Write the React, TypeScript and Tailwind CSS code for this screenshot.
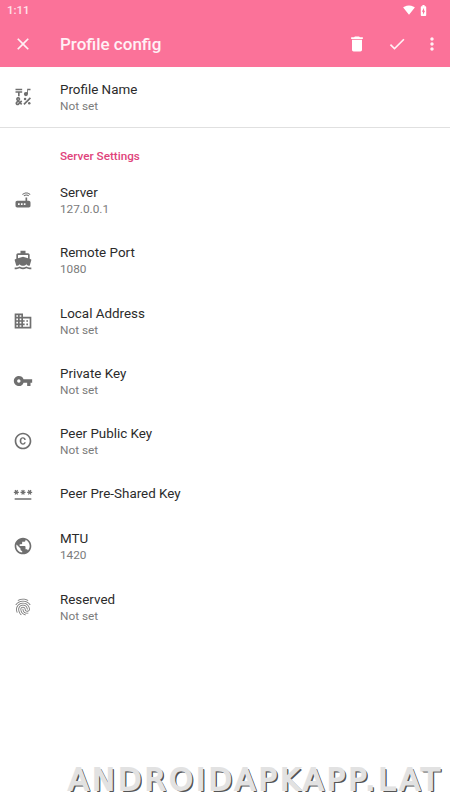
import React from 'react';
import {
  MdBatteryChargingFull,
  MdCheck,
  MdClose,
  MdCopyright,
  MdDelete,
  MdDirectionsBoat,
  MdDomain,
  MdEmojiSymbols,
  MdFingerprint,
  MdMoreVert,
  MdPassword,
  MdPublic,
  MdRouter,
  MdSignalWifi4Bar,
  MdVpnKey,
} from 'react-icons/md';
import type { IconType } from 'react-icons';

interface Preference {
  icon: IconType;
  title: string;
  summary?: string;
}

const serverSettings: Preference[] = [
  { icon: MdRouter, title: 'Server', summary: '127.0.0.1' },
  { icon: MdDirectionsBoat, title: 'Remote Port', summary: '1080' },
  { icon: MdDomain, title: 'Local Address', summary: 'Not set' },
  { icon: MdVpnKey, title: 'Private Key', summary: 'Not set' },
  { icon: MdCopyright, title: 'Peer Public Key', summary: 'Not set' },
  { icon: MdPassword, title: 'Peer Pre-Shared Key' },
  { icon: MdPublic, title: 'MTU', summary: '1420' },
  { icon: MdFingerprint, title: 'Reserved', summary: 'Not set' },
];

function PreferenceRow({ icon: Icon, title, summary }: Preference) {
  return (
    <div className={`flex items-center pl-[13.4px] ${summary ? 'h-[60.4px]' : 'h-[44.4px]'}`}>
      <Icon className="mr-[26.6px] size-5 shrink-0 text-[#6f6f6f]" />
      <div>
        <div className="pt-px text-[13.4px] leading-[18px] text-[#2b2b2b]">{title}</div>
        {summary && <div className="-mt-px text-[11.8px] leading-4 text-[#7b7b7b]">{summary}</div>}
      </div>
    </div>
  );
}

export default function App() {
  return (
    <div className="relative h-[800px] w-[450px] overflow-hidden bg-white font-[Roboto,sans-serif]">
      {/* Status bar + toolbar */}
      <header className="h-[67px] bg-[#fb7299] text-white">
        <div className="flex h-5 items-center justify-between pr-[20px] pl-[7px]">
          <span className="pt-[2px] text-[11.5px] font-medium text-white/80">1:11</span>
          <div className="flex items-center gap-[2px]">
            <MdSignalWifi4Bar className="size-3" />
            <MdBatteryChargingFull className="size-[13px]" />
          </div>
        </div>
        <div className="flex h-[47px] items-center pr-[8.5px] pl-[13.4px]">
          <MdClose className="size-5 text-white/90" />
          <h1 className="ml-[26.6px] flex-1 pt-[2px] text-[17px] font-medium text-white/90">Profile config</h1>
          <div className="flex items-center">
            <MdDelete className="mr-5 size-5" />
            <MdCheck className="mr-[15px] size-5 text-white/90" />
            <MdMoreVert className="size-5 text-white/90" />
          </div>
        </div>
      </header>

      <main>
        <div className="flex h-[61px] flex-col border-b border-[#e0e0e0]">
          <PreferenceRow icon={MdEmojiSymbols} title="Profile Name" summary="Not set" />
        </div>
        <h2 className="flex h-[41.6px] items-end pb-[6px] pl-[60px] text-[11.7px] leading-4 font-medium text-[#e0437b]">
          Server Settings
        </h2>
        {serverSettings.map((pref) => (
          <PreferenceRow key={pref.title} {...pref} />
        ))}
      </main>

      {/* Watermark */}
      <div className="absolute right-[7px] bottom-0 font-['DejaVu_Sans',sans-serif] text-[30px] leading-[40px] tracking-[3.5px] whitespace-nowrap text-[#e2e2e2] [-webkit-text-stroke:1.8px_#e2e2e2] [text-shadow:1px_1px_0_#555,2px_1px_0_#555,2px_2px_0_#555]">
        ANDROIDAPKAPP.LAT
      </div>
    </div>
  );
}
